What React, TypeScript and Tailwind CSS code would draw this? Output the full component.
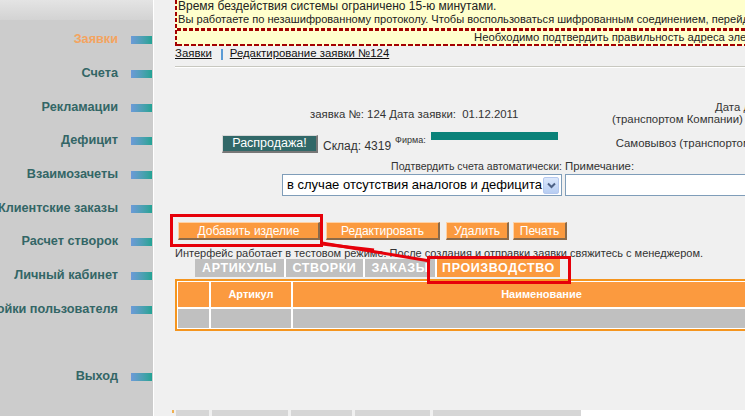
import React from "react";

const menu = [
  { t: "Заявки", active: true },
  { t: "Счета" },
  { t: "Рекламации" },
  { t: "Дефицит" },
  { t: "Взаимозачеты" },
  { t: "Клиентские заказы" },
  { t: "Расчет створок" },
  { t: "Личный кабинет" },
  { t: "Настройки пользователя" },
  { t: "" },
  { t: "Выход" },
];

function SideItem({ t, active }: { t: string; active?: boolean }) {
  return (
    <div className="h-[33.7px] flex items-center justify-end pr-[1px] whitespace-nowrap">
      {t ? (
        <>
          <span className={`shrink-0 text-[12.7px] font-bold ${active ? "text-[#f4a460]" : "text-[#336666]"}`}>{t}</span>
          <span className="ml-[13px] w-[21px] h-[8px] mt-[1px] shrink-0 bg-gradient-to-r from-[#6c9ad8] to-[#21a394]" />
        </>
      ) : null}
    </div>
  );
}

function OrangeBtn({ children, w }: { children: React.ReactNode; w: string }) {
  return (
    <div
      className={`${w} shrink-0 h-[18px] flex items-center justify-center bg-[#fb9a3f] text-white text-[12px] border-t border-l border-t-[#ffd2a6] border-l-[#ffd2a6] border-r-2 border-b-2 border-r-[#8a6a4a] border-b-[#8a6a4a]`}
    >
      {children}
    </div>
  );
}

export default function App() {
  return (
    <div className="w-[745px] h-[416px] flex overflow-hidden font-['Liberation_Sans',Arial,sans-serif] text-[#333]">
      {/* Sidebar */}
      <aside className="w-[154px] shrink-0 bg-[#cccccc] border-r border-white overflow-hidden flex flex-col">
        <div className="h-[20px] bg-gradient-to-b from-[#e4e4e4] to-[#d3d3d3]" />
        <div className="pt-[3px] flex flex-col">
          {menu.map((m, i) => (
            <SideItem key={i} t={m.t} active={m.active} />
          ))}
        </div>
      </aside>

      {/* Main */}
      <main className="flex-1 relative bg-[#f0f0f0] overflow-hidden pl-[21px]">
        {/* Notice */}
        <div className="w-[800px] flex bg-[#ffffcc] text-[#222]">
          <div className="w-[2px] shrink-0 bg-[repeating-linear-gradient(180deg,#a40000_0_4px,transparent_4px_6px)]" />
          <div className="flex-1">
            <div className="h-[13px] leading-[13px] pl-[1px] whitespace-nowrap text-[12px]">Время бездействия системы ограничено 15-ю минутами.</div>
            <div className="h-[13px] leading-[13px] pl-[1px] whitespace-nowrap text-[11.1px]">
              Вы работаете по незашифрованному протоколу. Чтобы воспользоваться шифрованным соединением, перейдите по ссылке
            </div>
            <div className="mt-[2px] h-[3px] bg-[repeating-linear-gradient(90deg,#a40000_0_4px,transparent_4px_6px)]" />
            <div className="h-[13px] leading-[13px] pl-[297px] whitespace-nowrap text-[11.3px]">
              Необходимо подтвердить правильность адреса электронной почты
            </div>
            <div className="h-[2px] bg-[repeating-linear-gradient(90deg,#a40000_0_5px,transparent_5px_7px)]" />
          </div>
        </div>

        {/* Breadcrumb */}
        <div className="mt-[2px] h-[12px] flex items-center text-[11.4px] text-[#111] whitespace-nowrap">
          <span className="underline">Заявки</span>
          <span className="ml-[9px] w-[2px] h-[11px] bg-[#5b9bd5]" />
          <span className="ml-[7px] underline">Редактирование заявки №124</span>
        </div>
        <div className="mt-[6px] w-[700px] h-[2px] bg-[#c8c8c0] border-b border-white" />

        {/* Info row 1 */}
        <div className="mt-[32px] h-[30px] flex text-[11.4px] whitespace-nowrap">
          <div className="w-[437px] shrink-0 pl-[135px] pt-[8px] leading-[12px]">
            заявка №: 124 Дата заявки:&nbsp; 01.12.2011
          </div>
          <div className="flex flex-col leading-[12px] pt-[1px] shrink-0">
            <div className="pl-[103px]">Дата доставки:</div>
            <div>(транспортом Компании)</div>
          </div>
        </div>

        {/* Info row 2 */}
        <div className="h-[30px] flex items-start pl-[47px] whitespace-nowrap">
          <div className="shrink-0 mt-[5px] w-[96px] h-[18px] flex items-center justify-center bg-[#316868] text-white text-[12.5px] border-t border-l border-[#d8d8d8] border-r-2 border-b-2 border-r-[#777] border-b-[#777]">
            Распродажа!
          </div>
          <div className="shrink-0 mt-[9px] ml-[5px] text-[12px] leading-[14px]">Склад: 4319</div>
          <div className="shrink-0 mt-[5px] ml-[4px] text-[9px] leading-[11px]">Фирма:</div>
          <div className="shrink-0 mt-[2px] ml-[5px] w-[127px] h-[8px] bg-[#0a8279]" />
          <div className="shrink-0 mt-[7px] ml-[58px] text-[11.4px] leading-[12px]">Самовывоз (транспортом клиента)</div>
        </div>

        {/* Row 3 */}
        <div className="h-[14px] flex items-center whitespace-nowrap">
          <div className="w-[387px] shrink-0 text-right text-[10.5px]">Подтвердить счета автоматически:</div>
          <div className="shrink-0 ml-[3px] text-[11.4px]">Примечание:</div>
        </div>

        {/* Row 4 */}
        <div className="h-[22px] flex pl-[107px]">
          <div className="w-[280px] h-[22px] shrink-0 bg-white border border-[#7f9db9] flex items-center pl-[4px] pr-[2px]">
            <span className="flex-1 text-[13px] text-black whitespace-nowrap">в случае отсутствия аналогов и дефицита</span>
            <span className="shrink-0 w-[16px] h-[17px] bg-gradient-to-b from-[#dce8fc] to-[#b7cdf2] border border-[#b5c8ee] rounded-[2px] flex items-center justify-center">
              <svg width="9" height="7" viewBox="0 0 9 7">
                <path d="M1 1.5 L4.5 5 L8 1.5" fill="none" stroke="#4d6185" strokeWidth="2" />
              </svg>
            </span>
          </div>
          <div className="ml-[3px] w-[200px] h-[22px] shrink-0 bg-white border border-[#7f9db9]" />
        </div>

        {/* Buttons */}
        <div className="mt-[26px] flex pl-[3px] gap-[6px]">
          <OrangeBtn w="w-[142px]">Добавить изделие</OrangeBtn>
          <OrangeBtn w="w-[114px]">Редактировать</OrangeBtn>
          <OrangeBtn w="w-[63px]">Удалить</OrangeBtn>
          <div className="-ml-[2px] shrink-0">
            <OrangeBtn w="w-[54px]">Печать</OrangeBtn>
          </div>
        </div>

        <div className="mt-[8px] h-[11px] leading-[11px] text-[11px] whitespace-nowrap">
          Интерфейс работает в тестовом режиме. После создания и отправки заявки свяжитесь с менеджером.
        </div>

        {/* Tabs */}
        <div className="flex pl-[20px] h-[18px] text-[12.5px] font-bold text-white tracking-[0.6px]">
          <div className="shrink-0 w-[89px] bg-[#c0c0c0] flex items-center justify-center">АРТИКУЛЫ</div>
          <div className="shrink-0 w-[2px] bg-white" />
          <div className="shrink-0 w-[77px] bg-[#c0c0c0] flex items-center justify-center">СТВОРКИ</div>
          <div className="shrink-0 w-[2px] bg-white" />
          <div className="shrink-0 w-[70px] bg-[#c0c0c0] flex items-center justify-center">ЗАКАЗЫ</div>
          <div className="shrink-0 w-[2px] bg-white" />
          <div className="shrink-0 w-[123px] bg-[#fb9a3f] flex items-center justify-center">ПРОИЗВОДСТВО</div>
        </div>

        {/* Table */}
        <div className="mt-[2px] w-[620px] border-2 border-[#f5951e] bg-white p-[1px]">
          <div className="grid grid-cols-[31px_80px_497px] gap-[2px]">
            <div className="h-[25px] bg-[#fb9a3f]" />
            <div className="h-[25px] bg-[#fb9a3f] flex items-center justify-center text-white text-[11px] font-bold">Артикул</div>
            <div className="h-[25px] bg-[#fb9a3f] flex items-center justify-center text-white text-[11px] font-bold">Наименование</div>
            <div className="h-[19px] bg-[#c0c0c0]" />
            <div className="h-[19px] bg-[#c0c0c0]" />
            <div className="h-[19px] bg-[#c0c0c0]" />
          </div>
        </div>

        {/* Bottom partial row */}
        <div className="mt-[79px] flex h-[6px] -ml-[3px] items-start">
          <div className="shrink-0 w-[2px] h-[3px] bg-[#f0b050]" />
          <div className="shrink-0 ml-[2px] w-[33px] h-[6px] bg-[#d6d6d6]" />
          <div className="shrink-0 ml-[3px] w-[76px] h-[6px] bg-[#d6d6d6]" />
          <div className="shrink-0 ml-[3px] w-[61px] h-[6px] bg-[#d6d6d6]" />
          <div className="shrink-0 ml-[3px] w-[75px] h-[6px] bg-[#d6d6d6]" />
          <div className="shrink-0 ml-[3px] w-[148px] h-[6px] bg-[#d6d6d6]" />
          <div className="shrink-0 w-[200px] h-[6px] bg-white" />
        </div>

        {/* Annotations */}
        <div className="absolute left-[16px] top-[214px] w-[153px] h-[33px] border-[3px] border-[#e6000a]" />
        <div className="absolute left-[273px] top-[256px] w-[144px] h-[28px] border-[3px] border-[#e6000a]" />
        <svg className="absolute left-0 top-0" width="591" height="416" viewBox="0 0 591 416">
          <path d="M168 243 L276 261" stroke="#e6000a" strokeWidth="3" fill="none" />
          <path d="M168 244 L220 250" stroke="#e6000a" strokeWidth="3" fill="none" />
        </svg>
      </main>
    </div>
  );
}
